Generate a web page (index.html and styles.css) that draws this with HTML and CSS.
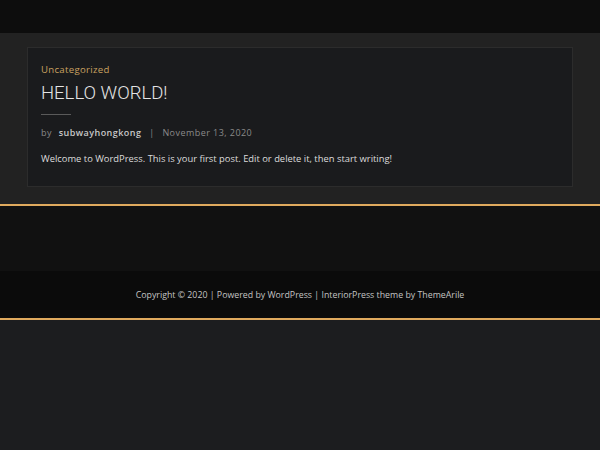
FILE: index.html
```html
<!DOCTYPE html>
<html lang="en">
<head>
    <meta charset="UTF-8">
    <meta name="viewport" content="width=device-width, initial-scale=1.0">
    <title>subwayhongkong</title>
    <link rel="stylesheet" href="styles.css">
</head>
<body>
    <header class="site-header"></header>

    <main class="content-area">
        <article class="post">
            <a class="post-cat" href="#">Uncategorized</a>
            <h2 class="post-title">Hello World!</h2>
            <div class="post-meta">
                <span class="by">by</span>
                <a class="author" href="#">subwayhongkong</a>
                <span class="sep">|</span>
                <span class="date">November 13, 2020</span>
            </div>
            <p class="post-text">Welcome to WordPress. This is your first post. Edit or delete it, then start writing!</p>
        </article>
    </main>

    <footer class="site-footer">
        <div class="footer-widgets"></div>
        <div class="copyright">
            <p>Copyright &copy; 2020 | Powered by WordPress | InteriorPress theme by ThemeArile</p>
        </div>
    </footer>
</body>
</html>
```

FILE: styles.css
```css
body {
    font-family: 'Open Sans', sans-serif;
    margin: 0;
    padding: 0;
    background: #1c1d1f;
}

a {
    text-decoration: none;
}

.site-header {
    height: 33px;
    background: #0d0d0d;
}

.content-area {
    background: #222222;
    padding: 14px 27px 17px 27px;
}

.post {
    background: #1a1b1d;
    border: 1px solid #2c2c2c;
    padding: 15px 13px 20px 13px;
}

.post-cat {
    display: block;
    font-size: 9.6px;
    color: #c9a160;
    letter-spacing: 0.3px;
    line-height: 14px;
}

.post-title {
    font-family: 'Roboto', sans-serif;
    font-weight: 300;
    font-size: 18.5px;
    text-transform: uppercase;
    letter-spacing: 0;
    color: #e4e4e4;
    margin: 3px 0 0 0;
    line-height: 26px;
}

.post-title::after {
    content: '';
    display: block;
    width: 30px;
    height: 1px;
    background: #5a5a5a;
    margin-top: 8px;
}

.post-meta {
    font-size: 9px;
    letter-spacing: 0.45px;
    color: #8a8a8a;
    margin-top: 11px;
    line-height: 14px;
}

.post-meta .author {
    color: #c8c8c8;
    font-weight: 600;
    margin-left: 4px;
}

.post-meta .sep {
    margin: 0 5px;
}

.post-text {
    font-size: 9.4px;
    color: #dcdcdc;
    margin: 12px 0 0 0;
    line-height: 14px;
}

.site-footer {
    border-top: 2px solid #e0aa5e;
    border-bottom: 2px solid #e0aa5e;
}

.footer-widgets {
    height: 65px;
    background: #111111;
}

.copyright {
    background: #0b0b0b;
    padding: 17px 0 16px 0;
    text-align: center;
}

.copyright p {
    margin: 0;
    font-size: 8.8px;
    color: #c4c4c4;
    line-height: 14px;
}
```
